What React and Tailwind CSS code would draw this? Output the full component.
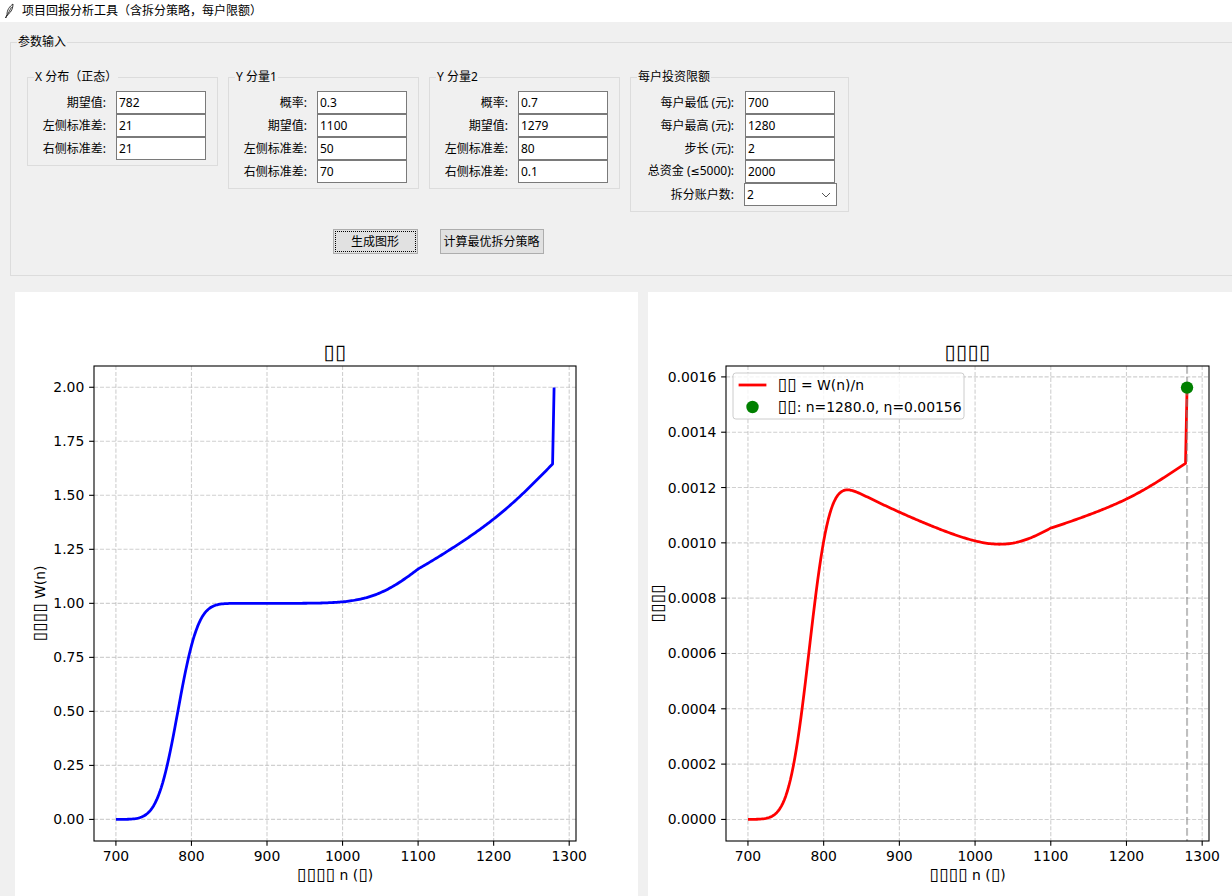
import React from 'react';

function erf(x) {
  const s = Math.sign(x);
  x = Math.abs(x);
  const t = 1 / (1 + 0.3275911 * x);
  const y = 1 - ((((1.061405429 * t - 1.453152027) * t + 1.421413741) * t - 0.284496736) * t + 0.254829592) * t * Math.exp(-x * x);
  return s * y;
}
const Phi = (z) => 0.5 * (1 + erf(z / Math.SQRT2));
const splitCdf = (x, mu, sl, sr) => (x < mu ? Phi((x - mu) / sl) : Phi((x - mu) / sr));

const NS = [];
for (let n = 700; n <= 1280; n += 2) NS.push(n);
const W = NS.map((n) => splitCdf(n, 782, 21, 21) + 0.3 * splitCdf(n, 1100, 50, 70) + 0.7 * splitCdf(n, 1279, 80, 0.1));
const ETA = W.map((w, i) => w / NS[i]);

const lim = (arr) => {
  const mn = Math.min(...arr);
  const mx = Math.max(...arr);
  const m = (mx - mn) * 0.05;
  return [mn - m, mx + m];
};

const FONT = 'DejaVu Sans, sans-serif';
const FS = 13.9;
const TOFU = '\u25AF';

function Tx({ s, fs }) {
  const parts = [];
  let buf = '';
  let key = 0;
  for (const ch of s) {
    if (ch === TOFU) {
      if (buf) parts.push(<tspan key={key++}>{buf}</tspan>);
      buf = '';
      parts.push(
        <tspan key={key++} fontSize={fs * 1.25}>
          {ch}
        </tspan>
      );
    } else buf += ch;
  }
  if (buf) parts.push(<tspan key={key++}>{buf}</tspan>);
  return <>{parts}</>;
}

function Chart({ x0, x1, y0, y1, data, color, yticks, fmt, title, xlabel, ylabel, ylabelX, extra }) {
  const xlim = [671, 1309];
  const ylim = lim(data);
  const sx = (v) => x0 + ((v - xlim[0]) / (xlim[1] - xlim[0])) * (x1 - x0);
  const sy = (v) => y1 - ((v - ylim[0]) / (ylim[1] - ylim[0])) * (y1 - y0);
  const xticks = [700, 800, 900, 1000, 1100, 1200, 1300];
  const pts = NS.map((n, i) => `${sx(n).toFixed(2)},${sy(data[i]).toFixed(2)}`).join(' ');
  const cx = (x0 + x1) / 2;
  const cy = (y0 + y1) / 2;
  return (
    <svg width="623" height="604" viewBox="0 0 623 604" className="block">
      <rect x={x0} y={y0} width={x1 - x0} height={y1 - y0} fill="#fff" />
      <g stroke="#b0b0b0" strokeOpacity="0.6" strokeWidth="1.1" strokeDasharray="4.1 1.8">
        {xticks.map((t) => (
          <line key={'gx' + t} x1={sx(t)} x2={sx(t)} y1={y0} y2={y1} />
        ))}
        {yticks.map((t) => (
          <line key={'gy' + t} x1={x0} x2={x1} y1={sy(t)} y2={sy(t)} />
        ))}
      </g>
      <polyline points={pts} fill="none" stroke={color} strokeWidth="2.78" strokeLinejoin="round" strokeLinecap="butt" />
      {extra && extra(sx, sy)}
      <rect x={x0} y={y0} width={x1 - x0} height={y1 - y0} fill="none" stroke="#000" strokeWidth="1.1" />
      <g stroke="#000" strokeWidth="1.1">
        {xticks.map((t) => (
          <line key={'tx' + t} x1={sx(t)} x2={sx(t)} y1={y1} y2={y1 + 4.86} />
        ))}
        {yticks.map((t) => (
          <line key={'ty' + t} x1={x0 - 4.86} x2={x0} y1={sy(t)} y2={sy(t)} />
        ))}
      </g>
      <g fontFamily={FONT} fontSize={FS} fill="#000">
        {xticks.map((t) => (
          <text key={'lx' + t} x={sx(t)} y={y1 + 20} textAnchor="middle">
            {t}
          </text>
        ))}
        {yticks.map((t) => (
          <text key={'ly' + t} x={x0 - 9.7} y={sy(t) + 5} textAnchor="end">
            {fmt(t)}
          </text>
        ))}
        <text x={cx} y={y1 + 39} textAnchor="middle">
          <Tx s={xlabel} fs={FS} />
        </text>
        <text x={ylabelX} y={cy} textAnchor="middle" transform={`rotate(-90 ${ylabelX} ${cy})`}>
          <Tx s={ylabel} fs={FS} />
        </text>
        <text x={cx} y={y0 - 7} textAnchor="middle" fontSize="16.67">
          <Tx s={title} fs={16.67} />
        </text>
      </g>
    </svg>
  );
}

function Feather() {
  return (
    <svg width="10" height="16" viewBox="0 0 10 16" className="block">
      <path d="M1.5 15 L3 11.5 C3 7 5.5 3.5 9 1 C9 5 7.5 9 3.8 11.6 Z" fill="#fff" stroke="#333" strokeWidth="1" strokeLinejoin="round" />
      <path d="M2 14.5 L7.5 4" stroke="#333" strokeWidth="0.9" />
    </svg>
  );
}

function Entry({ value, className = '' }) {
  return (
    <div className={'w-[90px] h-[23px] border border-[#7a7a7a] bg-white pl-[2px] flex items-center text-[12px] text-black ' + className}>
      {value}
    </div>
  );
}

function Group({ title, w, h, rows, combo }) {
  return (
    <div className="relative border border-[#dcdcdc] shrink-0" style={{ width: w, height: h }}>
      <div className="absolute left-[6px] top-[-9px] px-[1px] bg-[#f0f0f0] text-[12px] leading-[16px] text-black whitespace-nowrap">
        {title}
      </div>
      <div className="pt-[13px] pr-[11px] flex flex-col">
        {rows.map(([l, v], i) => (
          <div key={i} className="flex items-center h-[23px]">
            <div className="flex-1 text-right pr-[10px] text-[12px] leading-[16px] whitespace-nowrap">{l}</div>
            <div className={combo ? 'w-[93px]' : ''}>
              <Entry value={v} className={combo ? 'ml-[1px]' : ''} />
            </div>
          </div>
        ))}
        {combo && (
          <div className="flex items-center h-[23px]">
            <div className="flex-1 text-right pr-[10px] text-[12px] leading-[16px] whitespace-nowrap">{combo[0]}</div>
            <div className="w-[93px] h-[23px] border border-[#7a7a7a] bg-white pl-[2px] flex items-center justify-between text-[12px]">
              <span>{combo[1]}</span>
              <svg width="10" height="6" viewBox="0 0 10 6" className="mr-[5px]">
                <polyline points="1,1 5,5 9,1" fill="none" stroke="#555" strokeWidth="1" />
              </svg>
            </div>
          </div>
        )}
      </div>
    </div>
  );
}

const GROUPS = [
  { title: 'X 分布（正态）', w: 191, h: 89, rows: [['期望值:', '782'], ['左侧标准差:', '21'], ['右侧标准差:', '21']] },
  { title: 'Y 分量1', w: 191, h: 112, rows: [['概率:', '0.3'], ['期望值:', '1100'], ['左侧标准差:', '50'], ['右侧标准差:', '70']] },
  { title: 'Y 分量2', w: 191, h: 112, rows: [['概率:', '0.7'], ['期望值:', '1279'], ['左侧标准差:', '80'], ['右侧标准差:', '0.1']] },
  {
    title: '每户投资限额',
    w: 219,
    h: 135,
    rows: [['每户最低 (元):', '700'], ['每户最高 (元):', '1280'], ['步长 (元):', '2'], [<>总资金 (<span className="font-['DejaVu_Sans',sans-serif] text-[11px]">≤</span>5000):</>, '2000']],
    combo: ['拆分账户数:', '2'],
  },
];

export default function App() {
  const etaMax = ETA[ETA.length - 1];
  return (
    <div className="w-[1232px] h-[896px] overflow-hidden bg-[#f0f0f0] font-['Noto_Sans','Noto_Sans_CJK_SC',sans-serif] text-black">
      <div className="h-[22px] bg-white flex items-center pl-[4px] gap-[8px]">
        <Feather />
        <span className="text-[12px] leading-[16px] whitespace-nowrap">项目回报分析工具（含拆分策略，每户限额）</span>
      </div>
      <div className="pl-[10px] pt-[20px]">
        <div className="relative border border-[#dcdcdc] w-[1262px] h-[234px] pl-[16px] pt-[34px]">
          <div className="absolute left-[6px] top-[-9px] px-[1px] bg-[#f0f0f0] text-[12px] leading-[16px] whitespace-nowrap">参数输入</div>
          <div className="inline-flex flex-col items-center">
            <div className="flex items-start gap-[10px]">
              {GROUPS.map((g) => (
                <Group key={g.title} {...g} />
              ))}
            </div>
            <div className="flex gap-[22px] mt-[17px]">
              <button className="relative w-[85px] h-[25px] bg-[#e1e1e1] border border-[#adadad] text-[12px] leading-[16px] flex items-center justify-center">
                <span className="absolute inset-[1px] border border-dotted border-black"></span>
                生成图形
              </button>
              <button className="w-[104px] h-[25px] bg-[#e1e1e1] border border-[#adadad] text-[12px] leading-[16px] flex items-center justify-center">
                计算最优拆分策略
              </button>
            </div>
          </div>
        </div>
      </div>
      <div className="pl-[15px] pt-[16px] flex gap-[10px]">
        <div className="w-[623px] h-[604px] bg-white shrink-0">
          <Chart
            x0={79}
            x1={561}
            y0={74}
            y1={549}
            data={W}
            color="#0000ff"
            yticks={[0, 0.25, 0.5, 0.75, 1, 1.25, 1.5, 1.75, 2]}
            fmt={(t) => t.toFixed(2)}
            title={TOFU + TOFU}
            xlabel={TOFU.repeat(4) + ' n (' + TOFU + ')'}
            ylabel={TOFU.repeat(4) + ' W(n)'}
            ylabelX={30}
          />
        </div>
        <div className="w-[623px] h-[604px] bg-white shrink-0">
          <Chart
            x0={78}
            x1={561}
            y0={74}
            y1={549}
            data={ETA}
            color="#ff0000"
            yticks={[0, 0.0002, 0.0004, 0.0006, 0.0008, 0.001, 0.0012, 0.0014, 0.0016]}
            fmt={(t) => t.toFixed(4)}
            title={TOFU.repeat(4)}
            xlabel={TOFU.repeat(4) + ' n (' + TOFU + ')'}
            ylabel={TOFU.repeat(4)}
            ylabelX={15}
            extra={(sx, sy) => (
              <g>
                <line x1={sx(1280)} x2={sx(1280)} y1={74} y2={549} stroke="#808080" strokeOpacity="0.5" strokeWidth="2.08" strokeDasharray="7.7 3.3" />
                <circle cx={sx(1280)} cy={sy(etaMax)} r="6.2" fill="#008000" />
                <rect x="85" y="81" width="231" height="46" rx="2.8" fill="#fff" fillOpacity="0.8" stroke="#cccccc" strokeWidth="1" />
                <line x1="90.6" x2="118.4" y1="93" y2="93" stroke="#ff0000" strokeWidth="2.78" />
                <circle cx="104.5" cy="115" r="6.2" fill="#008000" />
                <g fontFamily={FONT} fontSize={FS} fill="#000">
                  <text x="129.5" y="98">
                    <Tx s={TOFU + TOFU + ' = W(n)/n'} fs={FS} />
                  </text>
                  <text x="129.5" y="120">
                    <Tx s={TOFU + TOFU + ': n=1280.0, η=0.00156'} fs={FS} />
                  </text>
                </g>
              </g>
            )}
          />
        </div>
      </div>
    </div>
  );
}
